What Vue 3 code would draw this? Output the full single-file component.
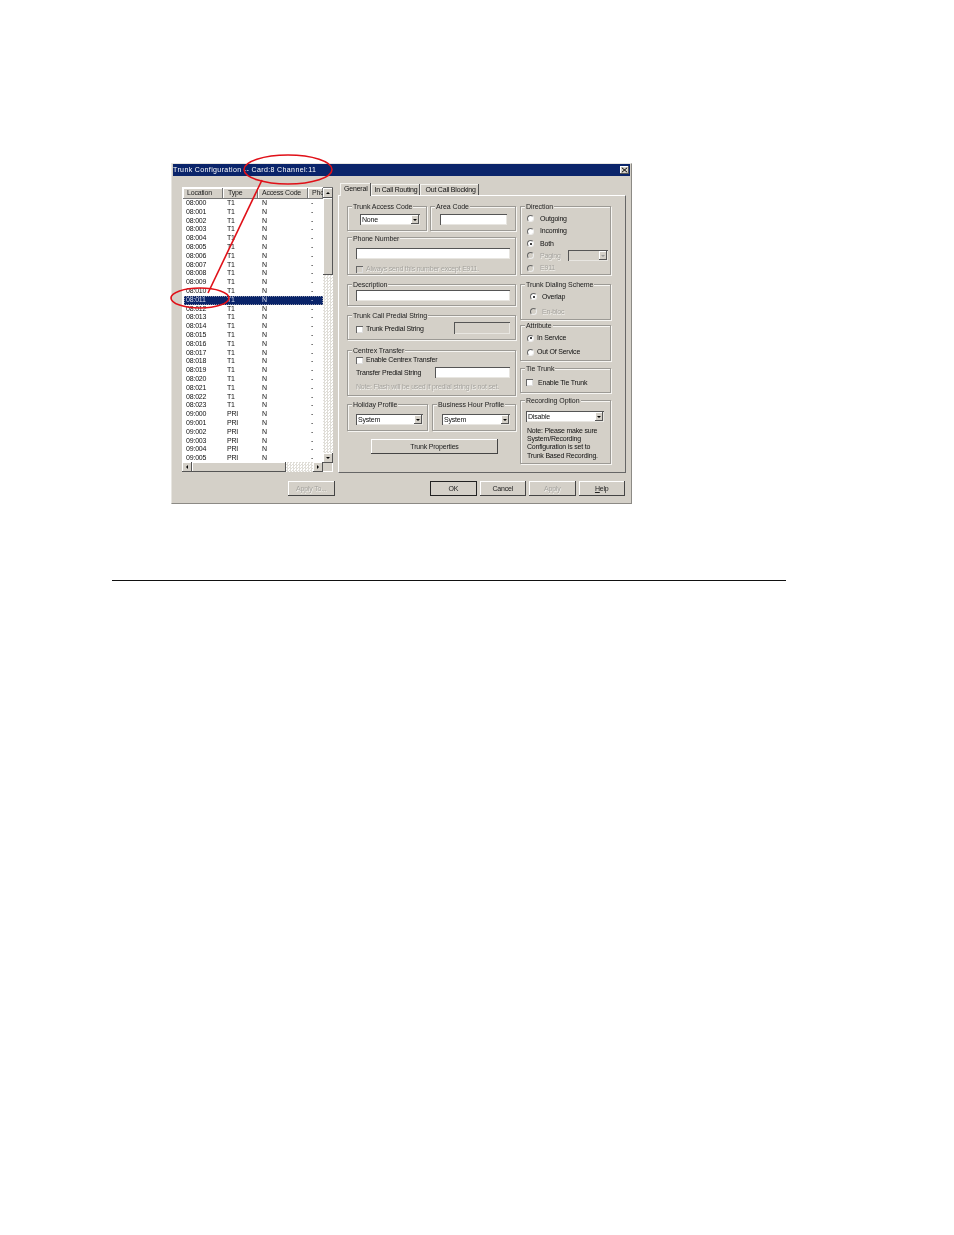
<script setup>
const rows = []
for (let i = 0; i < 24; i++) rows.push({ loc: '08:' + String(i).padStart(3, '0'), type: 'T1' })
for (let i = 0; i < 6; i++) rows.push({ loc: '09:' + String(i).padStart(3, '0'), type: 'PRI' })
const selected = '08:011'
</script>

<template>
  <div class="page">
    <div class="win">
      <div class="title">
        <span>Trunk Configuration -- Card:8 Channel:11</span>
        <span class="close">
          <svg viewBox="0 0 9 8" width="7" height="6"><path d="M1 1l7 6M8 1L1 7" stroke="#000" stroke-width="1.3" fill="none" /></svg>
        </span>
      </div>
      <div class="main">
        <div class="list">
          <div class="list-view">
            <div class="head">
              <span class="h h1">Location</span>
              <span class="h h2">Type</span>
              <span class="h h3">Access Code</span>
              <span class="h h4">Pho</span>
            </div>
            <div class="row" v-for="r in rows" :key="r.loc" :class="{ sel: r.loc === selected }">
              <span class="c1">{{ r.loc }}</span>
              <span class="c2">{{ r.type }}</span>
              <span class="c3">N</span>
              <span class="c4">-</span>
            </div>
          </div>
          <div class="vbar">
            <span class="sb-btn"><i class="tri up"></i></span>
            <span class="v-thumb"></span>
            <span class="track"></span>
            <span class="sb-btn"><i class="tri down"></i></span>
          </div>
          <div class="hbar">
            <span class="sb-btn"><i class="tri left"></i></span>
            <span class="h-thumb"></span>
            <span class="track"></span>
            <span class="sb-btn"><i class="tri right"></i></span>
          </div>
        </div>
        <div class="tabs-wrap">
          <div class="tabs">
            <span class="tab active">General</span>
            <span class="tab">In Call Routing</span>
            <span class="tab t-out">Out Call Blocking</span>
          </div>
          <div class="panel">
            <div class="col-l">
              <div class="pair g-top">
                <div class="group g-access">
                  <span class="legend">Trunk Access Code</span>
                  <div class="combo c-access"><span>None</span><b class="drop"><i class="tri down"></i></b></div>
                </div>
                <div class="group g-area">
                  <span class="legend">Area Code</span>
                  <div class="input i-area"></div>
                </div>
              </div>
              <div class="group g-phone">
                <span class="legend">Phone Number</span>
                <div class="input i-wide"></div>
                <label class="line dis l-always"><i class="check"></i>Always send this number except E911.</label>
              </div>
              <div class="group g-desc">
                <span class="legend">Description</span>
                <div class="input i-wide"></div>
              </div>
              <div class="group g-predial">
                <span class="legend">Trunk Call Predial String</span>
                <div class="line l-predial">
                  <i class="check"></i>Trunk Predial String
                  <span class="input i-predial"></span>
                </div>
              </div>
              <div class="group g-centrex">
                <span class="legend">Centrex Transfer</span>
                <label class="line"><i class="check"></i>Enable Centrex Transfer</label>
                <div class="line l-transfer">Transfer Predial String<span class="input i-transfer"></span></div>
                <div class="line dis">Note: Flash will be used if predial string is not set.</div>
              </div>
              <div class="pair g-profile">
                <div class="group g-holiday">
                  <span class="legend">Holiday Profile</span>
                  <div class="combo c-holiday"><span>System</span><b class="drop"><i class="tri down"></i></b></div>
                </div>
                <div class="group g-business">
                  <span class="legend">Business Hour Profile</span>
                  <div class="combo c-business"><span>System</span><b class="drop"><i class="tri down"></i></b></div>
                </div>
              </div>
              <button class="btn b-props">Trunk Properties</button>
            </div>
            <div class="col-r">
              <div class="group g-direction">
                <span class="legend">Direction</span>
                <div class="radio-line"><i class="radio"></i>Outgoing</div>
                <div class="radio-line"><i class="radio"></i>Incoming</div>
                <div class="radio-line"><i class="radio on"></i>Both</div>
                <div class="radio-line dis"><i class="radio"></i><span class="paging">Paging</span><div class="combo c-paging"><b class="drop"><i class="tri down gray"></i></b></div></div>
                <div class="radio-line dis"><i class="radio"></i>E911</div>
              </div>
              <div class="group g-dialing">
                <span class="legend">Trunk Dialing Scheme</span>
                <div class="radio-line"><i class="radio on"></i>Overlap</div>
                <div class="radio-line dis"><i class="radio"></i>En-bloc</div>
              </div>
              <div class="group g-attr">
                <span class="legend">Attribute</span>
                <div class="radio-line"><i class="radio on"></i>In Service</div>
                <div class="radio-line"><i class="radio"></i>Out Of Service</div>
              </div>
              <div class="group g-tie">
                <span class="legend">Tie Trunk</span>
                <label class="line"><i class="check"></i>Enable Tie Trunk</label>
              </div>
              <div class="group g-rec">
                <span class="legend">Recording Option</span>
                <div class="combo c-rec"><span>Disable</span><b class="drop"><i class="tri down"></i></b></div>
                <p class="note">Note: Please make sure System/Recording Configuration is set to Trunk Based Recording.</p>
              </div>
            </div>
          </div>
        </div>
      </div>
      <div class="footer">
        <button class="btn dis b-applyto">Apply To...</button>
        <button class="btn b-ok">OK</button>
        <button class="btn">Cancel</button>
        <button class="btn dis">Apply</button>
        <button class="btn"><u>H</u>elp</button>
      </div>
      <svg class="marks" viewBox="0 0 461 341" width="461" height="341">
        <ellipse cx="117" cy="6.5" rx="44" ry="14.5" />
        <ellipse cx="29" cy="135" rx="29" ry="10" />
        <path d="M91 17L37 130" />
      </svg>
    </div>
    <div class="rule"></div>
  </div>
</template>

<style>
html, body { background: #fff; }
</style>

<style scoped>
.page { width: 954px; height: 1235px; padding-top: 163px; box-sizing: border-box; overflow: hidden; background: #fff; font: 7px/8px "Liberation Sans", Arial, sans-serif; letter-spacing: -.2px; color: #111; }
.win { position: relative; box-sizing: border-box; width: 461px; height: 341px; margin-left: 171px; background: #d4d0c8; border: 1px solid #8c8a85; border-top-color: #e8e6e1; border-left-color: #e8e6e1; filter: blur(.25px); }
.title { height: 12px; margin: 0 1px; padding: 0 1px 0 0; background: #0a246a; color: #fff; display: flex; align-items: center; justify-content: space-between; letter-spacing: .38px; }
.close { width: 9px; height: 8px; background: #d4d0c8; box-shadow: inset -1px -1px 0 #555, inset 1px 1px 0 #fff; display: flex; align-items: center; justify-content: center; }
.main { display: flex; padding: 7px 0 0 10px; }
.list { width: 151px; height: 285px; margin-top: 4px; flex: none; position: relative; display: grid; grid-template-columns: 141px 10px; grid-template-rows: 275px 10px; box-sizing: border-box; box-shadow: inset 1px 1px 0 #777, inset -1px -1px 0 #fff; }
.list-view { background: #fff; padding: 1px 0 0 1px; overflow: hidden; }
.head { display: flex; height: 11px; background: #d4d0c8; align-items: flex-start; color: #222; }
.h { box-sizing: border-box; height: 11px; line-height: 10px; box-shadow: inset -1px -1px 0 #777, inset 1px 1px 0 #fff; white-space: nowrap; overflow: hidden; }
.h1 { width: 40px; padding-left: 4px; }
.h2 { width: 35px; padding-left: 5px; }
.h3 { width: 50px; padding-left: 4px; }
.h4 { width: 15px; padding-left: 4px; }
.row { display: flex; height: 8.8px; line-height: 8.8px; margin-left: 1px; }
.row span { white-space: nowrap; }
.c1 { width: 43px; padding-left: 2px; box-sizing: border-box; }
.c2 { width: 35px; }
.c3 { width: 49px; }
.c4 { width: 10px; }
.row.sel { background: #0a246a; color: #d8deee; outline: 1px dotted #8d93a8; outline-offset: -1px; }
.vbar { display: flex; flex-direction: column; grid-row: 1 / 3; grid-column: 2; height: 275px; margin-top: 1px; }
.hbar { display: flex; grid-row: 2; grid-column: 1; height: 10px; }
.sb-btn { flex: none; width: 10px; height: 10px; background: #d4d0c8; box-shadow: inset -1px -1px 0 #555, inset 1px 1px 0 #fff; display: flex; align-items: center; justify-content: center; }
.track { flex: 1; background-color: #fff; background-image: conic-gradient(#e0ded8 25%, #fff 0 50%, #e0ded8 0 75%, #fff 0); background-size: 3px 3px; }
.v-thumb { height: 77px; flex: none; background: #d4d0c8; box-shadow: inset -1px -1px 0 #555, inset 1px 1px 0 #fff; }
.h-thumb { width: 94px; flex: none; background: #d4d0c8; box-shadow: inset -1px -1px 0 #555, inset 1px 1px 0 #fff; }
.tri { display: block; width: 0; height: 0; border: 2px solid transparent; }
.tri.up { border-bottom-color: #000; border-top-width: 0; }
.tri.down { border-top-color: #000; border-bottom-width: 0; }
.tri.left { border-right-color: #000; border-left-width: 0; }
.tri.right { border-left-color: #000; border-right-width: 0; }
.tri.down.gray { border-top-color: #999; }
.tabs-wrap { margin-left: 5px; width: 288px; flex: none; }
.tabs { display: flex; height: 12px; padding-left: 2px; align-items: flex-end; }
.tab { height: 11px; line-height: 11px; padding: 0 3px 0 4px; white-space: nowrap; box-shadow: inset -1px 0 0 #555, inset 1px 1px 0 #f4f3ef; }
.tab.active { height: 13px; line-height: 12px; background: #d4d0c8; position: relative; z-index: 1; margin-bottom: -1px; }
.t-out { padding-left: 5px; }
.panel { box-sizing: border-box; height: 278px; display: flex; padding: 10px 0 0 8px; border: 1px solid; border-color: #fff #666 #666 #fff; }
.col-l { width: 169px; flex: none; display: flex; flex-direction: column; }
.col-r { width: 91px; margin-left: 4px; flex: none; display: flex; flex-direction: column; }
.group { position: relative; box-sizing: border-box; border: 1px solid #9c9a95; box-shadow: 1px 1px 0 #f6f5f2, inset 1px 1px 0 #f6f5f2; }
.legend { position: absolute; top: -4.5px; left: 4px; padding: 0 1px; background: #d4d0c8; line-height: 8px; white-space: nowrap; color: #222; letter-spacing: -.06px; }
.g-phone .legend { top: -3px; }
.pair { display: flex; justify-content: space-between; }
.g-top { height: 25px; }
.g-access { width: 80px; padding: 7px 0 0 12px; }
.g-area { width: 86px; padding: 7px 0 0 9px; }
.g-phone { height: 38px; margin-top: 6px; padding: 10px 0 0 8px; }
.g-desc { height: 22px; margin-top: 9px; padding: 5px 0 0 8px; }
.g-predial { height: 25px; margin-top: 9px; padding: 6px 0 0 8px; }
.g-centrex { height: 46px; margin-top: 10px; padding: 5px 0 0 8px; }
.g-profile { height: 27px; margin-top: 8px; }
.g-holiday { width: 81px; padding: 9px 0 0 8px; }
.g-business { width: 84px; padding: 9px 0 0 9px; }
.b-props { width: 127px; margin: 8px 0 0 24px; flex: none; }
.g-direction { height: 69px; padding-top: 5.6px; }
.g-dialing { height: 36px; margin-top: 9px; padding-top: 4px; }
.g-attr { height: 36px; margin-top: 5px; padding-top: 5px; }
.g-tie { height: 25px; margin-top: 7px; padding: 9.5px 0 0 5px; }
.g-rec { height: 64px; margin-top: 7px; padding: 10px 0 0 5px; }
.input, .combo { display: block; box-sizing: border-box; background: #fff; box-shadow: inset 1px 1px 0 #555, inset -1px -1px 0 #e8e6e1; }
.input { height: 11px; }
.i-wide { width: 154px; }
.i-area { width: 67px; height: 11px; }
.i-predial { width: 56px; height: 12px; margin-left: auto; margin-right: 5px; align-self: flex-start; background: #d4d0c8; }
.i-transfer { width: 75px; margin-left: auto; margin-right: 5px; }
.combo { height: 11px; display: flex; align-items: center; justify-content: space-between; padding: 1px 1px 1px 2px; line-height: 9px; }
.c-access { width: 60px; }
.c-holiday { width: 67px; }
.c-business { width: 68px; }
.c-rec { width: 78px; height: 11px; }
.c-paging { width: 40px; margin-left: 7px; background: #d4d0c8; }
.c-paging .drop { margin-left: auto; }
.drop { width: 8px; height: 9px; background: #d4d0c8; box-shadow: inset -1px -1px 0 #555, inset 1px 1px 0 #fff; display: flex; align-items: center; justify-content: center; }
.line { display: flex; align-items: center; height: 8px; white-space: nowrap; }
.dis { color: #a5a39e; text-shadow: .5px .5px 0 #f4f3ef; }
.l-always { margin-top: 6px; }
.l-predial { height: 14px; }
.l-transfer { height: 11px; margin-top: 3px; }
.g-centrex .line.dis { margin-top: 5px; }
.check { flex: none; display: block; width: 7px; height: 7px; margin-right: 3px; background: #fff; box-sizing: border-box; box-shadow: inset 1px 1px 0 #666, inset -1px -1px 0 #ddd; }
.dis .check { background: #d4d0c8; }
.g-tie .check { margin-right: 5px; }
.radio-line { display: flex; align-items: center; height: 12.4px; padding-left: 6px; white-space: nowrap; }
.radio { flex: none; position: relative; box-sizing: border-box; width: 7px; height: 7px; margin-right: 6px; border-radius: 50%; background: #fff; border: 1px solid; border-color: #666 #eee #eee #666; }
.radio.on::after { content: ""; position: absolute; left: 1.5px; top: 1.5px; width: 2px; height: 2px; border-radius: 50%; background: #000; }
.dis .radio { background: #d4d0c8; }
.paging { width: 21px; }
.g-dialing .radio-line { height: 15px; padding-left: 9px; }
.g-dialing .radio { margin-right: 5px; }
.g-attr .radio-line { height: 14px; padding-left: 6px; }
.g-attr .radio { margin-right: 3px; }
.note { margin: 5px 0 0 1px; width: 78px; line-height: 8.2px; }
.btn { box-sizing: border-box; display: block; height: 15px; padding: 0; font: inherit; letter-spacing: inherit; color: #222; background: #d4d0c8; border: 0; box-shadow: inset -1px -1px 0 #444, inset 1px 1px 0 #fff; }
.btn.dis { color: #a5a39e; }
.footer { display: flex; gap: 3px; margin-top: 8px; padding-left: 116px; }
.footer .btn { width: 46.5px; }
.footer .b-applyto { margin-right: 92.5px; }
.b-ok { outline: 1px solid #222; outline-offset: -1px; }
.marks { position: absolute; left: -1px; top: -1px; overflow: visible; pointer-events: none; }
.marks ellipse, .marks path { fill: none; stroke: #e01018; stroke-width: 1.6; }
.rule { width: 674px; height: 1px; margin: 76px 0 0 112px; background: #111; }
</style>
